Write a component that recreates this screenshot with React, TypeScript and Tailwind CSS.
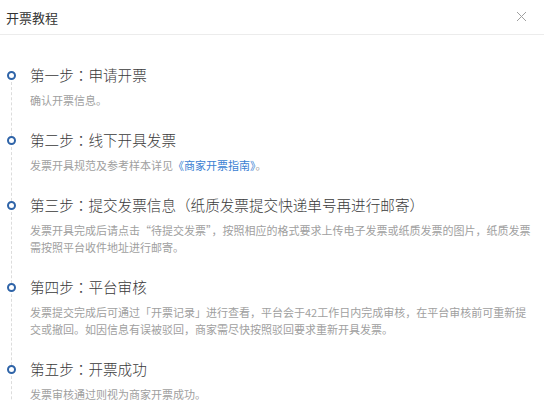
import React from "react";

const font = { fontFamily: '"Noto Sans CJK SC", "Noto Sans", sans-serif' };
const tc = { fontFamily: '"Noto Sans CJK TC", sans-serif' };

type Step = { head: string; rest: string; desc: React.ReactNode };

const steps: Step[] = [
  { head: "第一步", rest: "申请开票", desc: "确认开票信息。" },
  {
    head: "第二步",
    rest: "线下开具发票",
    desc: (
      <>
        发票开具规范及参考样本详见<span className="text-[#3b7fd3]">《商家开票指南》</span>。
      </>
    ),
  },
  {
    head: "第三步",
    rest: "提交发票信息（纸质发票提交快递单号再进行邮寄）",
    desc: (
      <>
        发票开具完成后请点击“待提交发票”，按照相应的格式要求上传电子发票或纸质发票的图片，纸质发票
        <br />
        需按照平台收件地址进行邮寄。
      </>
    ),
  },
  {
    head: "第四步",
    rest: "平台审核",
    desc: (
      <>
        发票提交完成后可通过「开票记录」进行查看，平台会于42工作日内完成审核，在平台审核前可重新提
        <br />
        交或撤回。如因信息有误被驳回，商家需尽快按照驳回要求重新开具发票。
      </>
    ),
  },
  { head: "第五步", rest: "开票成功", desc: "发票审核通过则视为商家开票成功。" },
];

export default function App() {
  return (
    <div className="w-[544px] h-[400px] overflow-hidden bg-white" style={font}>
      <div className="h-[35px] flex items-center justify-between border-b border-[#ececec] pl-[6px] pr-[17px]">
        <span className="text-[13px] text-[#333] leading-none">开票教程</span>
        <svg width="11" height="11" viewBox="0 0 11 11" className="mt-[-2px]">
          <path d="M1 1 L10 10 M10 1 L1 10" stroke="#a0a0a0" strokeWidth="1" fill="none" />
        </svg>
      </div>
      <div className="pt-[27px]">
        {steps.map((s, i) => (
          <div key={i} className="relative pl-[30px] pr-[10px] pb-[18px]">
            <div className="absolute left-[11px] top-[20px] bottom-[-14px] border-l border-dashed border-[#dcdcdc]" />
            <div className="absolute left-[7px] top-[9px] w-[9px] h-[9px] rounded-full border-2 border-[#2f64a8] bg-white" />
            <div className="text-[14.6px] leading-[26px] text-[#3a3a3a] font-light whitespace-nowrap">
              {s.head}
              <span style={tc}>：</span>
              {s.rest}
            </div>
            <div className="mt-[4px] text-[11px] leading-[17px] text-[#a0a0a0] whitespace-nowrap">{s.desc}</div>
          </div>
        ))}
      </div>
    </div>
  );
}
